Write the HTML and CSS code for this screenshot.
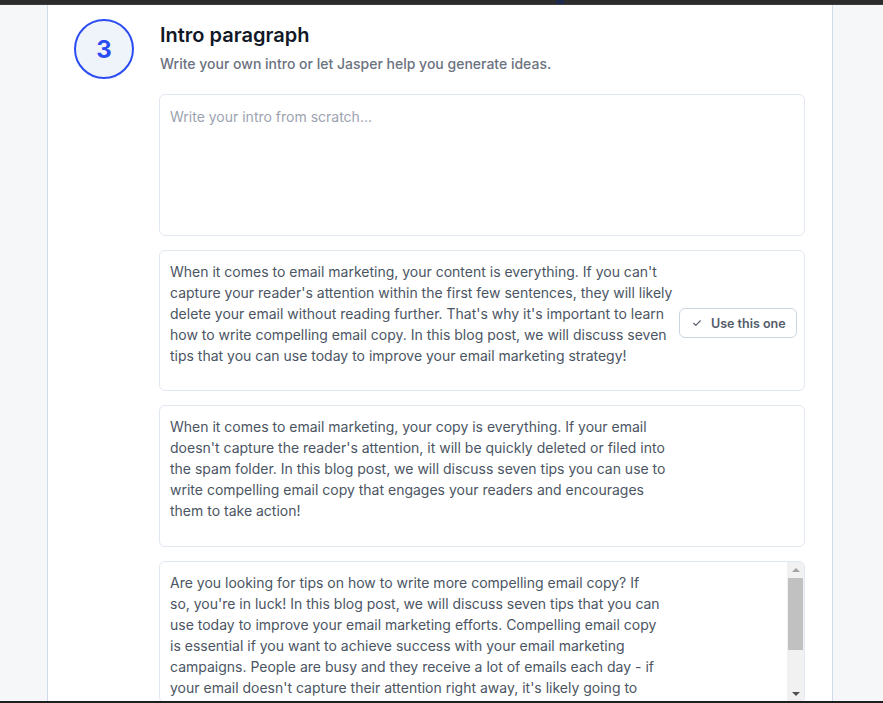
FILE: index.html
```html
<!DOCTYPE html>
<html>
<head>
<meta charset="utf-8">
<link rel="stylesheet" href="styles.css">
</head>
<body>
<div class="topbar"><span class="topmark"></span></div>
<div class="page">
  <div class="card">
    <div class="step">
      <div class="badge">3</div>
      <div class="step-body">
        <h2 class="title">Intro paragraph</h2>
        <p class="subtitle">Write your own intro or let Jasper help you generate ideas.</p>
        <div class="options">
          <div class="box box-input"><span class="placeholder">Write your intro from scratch...</span></div>
          <div class="box option">
            <p class="opt-text">When it comes to email marketing, your content is everything. If you can't capture your reader's attention within the first few sentences, they will likely delete your email without reading further. That's why it's important to learn how to write compelling email copy. In this blog post, we will discuss seven tips that you can use today to improve your email marketing strategy!</p>
            <div class="opt-action">
              <button class="use-btn"><svg class="check" viewBox="0 0 12 12" width="10" height="10"><path d="M2 6.3l2.6 2.6L10 3.3" fill="none" stroke="currentColor" stroke-width="1.3" stroke-linecap="round" stroke-linejoin="round"/></svg>Use this one</button>
            </div>
          </div>
          <div class="box option">
            <p class="opt-text">When it comes to email marketing, your copy is everything. If your email doesn't capture the reader's attention, it will be quickly deleted or filed into the spam folder. In this blog post, we will discuss seven tips you can use to write compelling email copy that engages your readers and encourages them to take action!</p>
            <div class="opt-action"></div>
          </div>
          <div class="box option scroll-box">
            <p class="opt-text narrow">Are you looking for tips on how to write more compelling email copy? If so, you're in luck! In this blog post, we will discuss seven tips that you can use today to improve your email marketing efforts. Compelling email copy is essential if you want to achieve success with your email marketing campaigns. People are busy and they receive a lot of emails each day - if your email doesn't capture their attention right away, it's likely going to end up in the trash.</p>
            <div class="fake-scroll">
              <span class="arrow up"></span>
              <span class="thumb"></span>
              <span class="track-fill"></span>
              <span class="arrow down"></span>
            </div>
          </div>
        </div>
      </div>
    </div>
  </div>
</div>
<div class="bottombar"></div>
</body>
</html>
```
FILE: styles.css
```css
* { box-sizing: border-box; }
html, body { margin: 0; padding: 0; height: 703px; overflow: hidden; }
body {
  background: #f6f7f9;
  font-family: Inter, "Noto Sans", sans-serif;
  display: flex;
  flex-direction: column;
}
.topbar {
  height: 5px;
  background: #2c2c2c;
  border-bottom: 1px solid #3c3c3c;
  position: relative;
  flex: none;
}
.topmark {
  position: absolute;
  left: 556px;
  top: 0;
  width: 8px;
  height: 4px;
  background: #1f2a4a;
}
.page {
  flex: 1;
  overflow: hidden;
  padding: 0 50px 0 47px;
}
.card {
  background: #fff;
  border-left: 1px solid #cfdbe8;
  border-right: 1px solid #cfdbe8;
  height: 100%;
  padding: 14px 27px 0 26px;
}
.step {
  display: flex;
  gap: 25px;
}
.badge {
  flex: none;
  width: 60px;
  height: 60px;
  border-radius: 50%;
  border: 2px solid #2b4cf3;
  background: #eff3fa;
  color: #2b4cf3;
  font-weight: 700;
  font-size: 24px;
  display: flex;
  align-items: center;
  justify-content: center;
}
.step-body { flex: 1; }
.title {
  margin: 2px 0 0 1px;
  font-size: 20px;
  font-weight: 600;
  color: #111827;
  line-height: 28px;
}
.subtitle {
  margin: 5px 0 0 1px;
  font-size: 14px;
  font-weight: 500;
  color: #6b7280;
  line-height: 20px;
}
.options {
  margin-top: 20px;
  display: flex;
  flex-direction: column;
  gap: 14px;
}
.box {
  height: 141.667px;
  flex: none;
  border: 1px solid #e2e8f0;
  border-radius: 6px;
  background: #fff;
}
.box-input {
  padding: 11px 10px;
}
.placeholder {
  font-size: 14px;
  line-height: 21px;
  color: #9ca3af;
}
.option {
  display: flex;
  padding: 10px 7px 10px 10px;
  gap: 3px;
  overflow: hidden;
}
.opt-text {
  margin: 0;
  width: 506px;
  flex: none;
  font-size: 14px;
  line-height: 21px;
  color: #4b5563;
}
.opt-action {
  flex: 1;
  display: flex;
  align-items: center;
  justify-content: flex-end;
  padding-top: 6px;
}
.use-btn {
  flex: none;
  display: flex;
  align-items: center;
  gap: 9px;
  height: 30px;
  width: 118px;
  justify-content: flex-start;
  white-space: nowrap;
  border: 1px solid #cbd5e1;
  border-radius: 6px;
  background: #fff;
  font-family: Inter, "Noto Sans", sans-serif;
  font-size: 12.5px;
  font-weight: 600;
  color: #535b69;
  padding: 0 0 0 12px;
}
.check { color: #535b69; flex: none; }
.scroll-box {
  padding: 10px 0 0 10px;
  justify-content: space-between;
}
.opt-text.narrow { width: 492px; }
.fake-scroll {
  flex: none;
  width: 17px;
  margin-top: -10px;
  height: 142px;
  background: #f1f1f1;
  display: flex;
  flex-direction: column;
  align-items: center;
}
.arrow {
  width: 0;
  height: 0;
  border-left: 4px solid transparent;
  border-right: 4px solid transparent;
  margin: 6px 0;
}
.arrow.up { border-bottom: 4px solid #a3a3a3; }
.arrow.down { border-top: 4px solid #505050; margin-bottom: 8px; }
.thumb {
  width: 15px;
  height: 72px;
  background: #c1c1c1;
}
.track-fill { flex: 1; }
.bottombar {
  height: 2px;
  background: #1f1f1f;
  flex: none;
}
```
